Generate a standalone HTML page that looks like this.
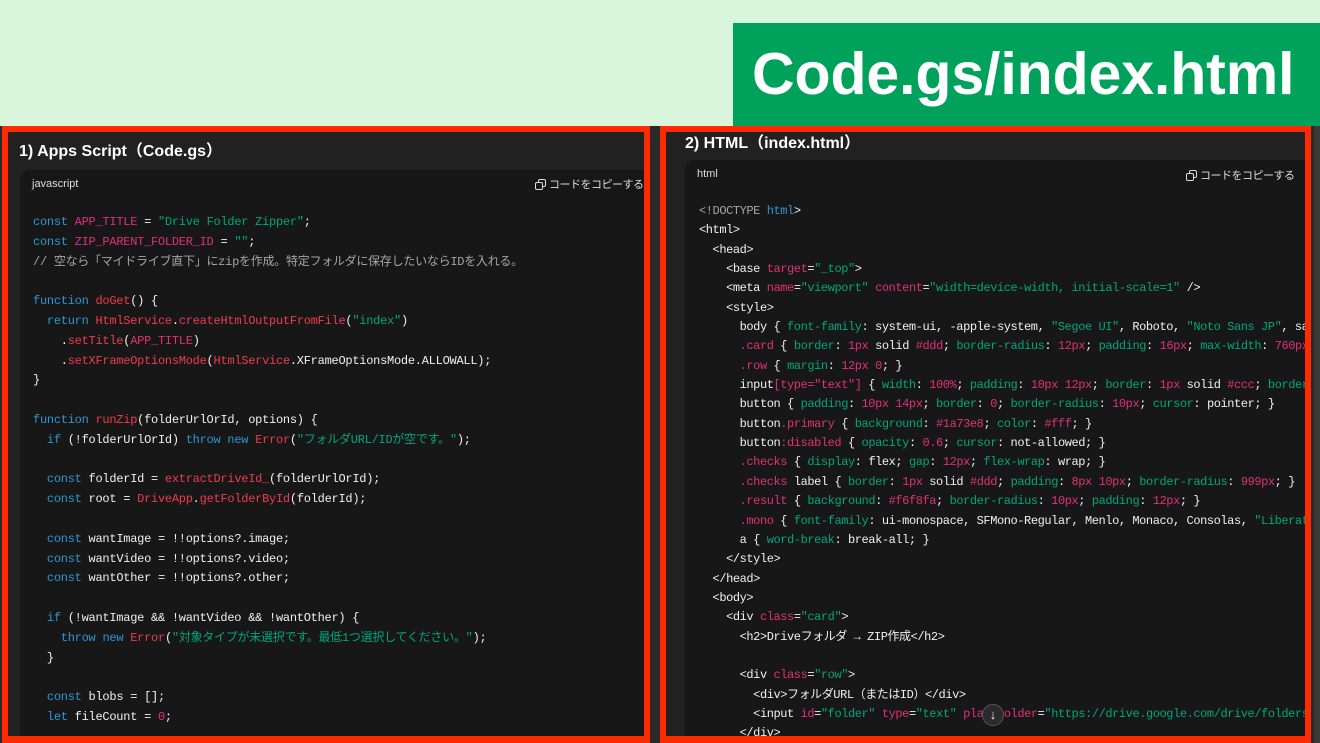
<!DOCTYPE html>
<html><head><meta charset="utf-8"><style>
*{margin:0;padding:0;box-sizing:border-box}
body{width:1320px;height:743px;overflow:hidden;background:#d9f6dd;position:relative;font-family:"Liberation Sans","Noto Sans CJK JP",sans-serif}
.abs{position:absolute}
#hdr{left:733px;top:23px;width:587px;height:103px;background:#00a15a;color:#fff;font-weight:bold;font-size:59px;line-height:103px;padding-left:19px;letter-spacing:-0.1px}
#bg{left:0;top:126px;width:1320px;height:617px;background:#2a2a2a}
.panel{background:#212121;border:6px solid #ff2a00;border-bottom-width:7px;overflow:hidden}
.title{position:absolute;color:#fff;font-weight:bold;font-size:16px}
.code{position:absolute;background:#171717;border-radius:10px;overflow:hidden}
.lang{position:absolute;color:#ddd;font-size:11px}
.copy{position:absolute;color:#ddd;font-size:11px;letter-spacing:-0.5px}
.copy svg{vertical-align:-2px;margin-right:3px}
pre{position:absolute;font-family:"Liberation Mono","Noto Sans CJK JP",monospace;font-size:12px;color:#f0f0f0;white-space:pre}
#lp{line-height:19.8px;letter-spacing:-0.26px}
#rp{line-height:19.35px;letter-spacing:-0.43px}
.k{color:#2e95d3}.r{color:#ef3a4e}.p{color:#df3079}.g{color:#00a67d}.c{color:#a5a5a5}
</style></head><body>
<div class="abs" id="hdr">Code.gs/index.html</div>
<div class="abs" id="bg"></div>
<div class="abs" style="left:1314px;top:126px;width:6px;height:617px;background:#3a3a3a"></div>

<div class="abs panel" style="left:2px;top:126px;width:648px;height:617px">
 <div class="title" style="left:11px;top:5px">1) Apps Script（Code.gs）</div>
 <div class="code" style="left:12px;top:38px;width:650px;height:600px">
  <div class="lang" style="left:12px;top:8px">javascript</div>
  <div class="copy" style="left:515px;top:6px"><svg width="11" height="11" viewBox="0 0 11 11" fill="none" stroke="#ddd" stroke-width="1"><rect x="3.5" y="0.5" width="7" height="7" rx="1.5"/><rect x="0.5" y="3.5" width="7" height="7" rx="1.5" fill="#171717"/></svg>コードをコピーする</div>
<pre id="lp" style="left:13px;top:43px"><span class="k">const</span> <span class="p">APP_TITLE</span> = <span class="g">"Drive Folder Zipper"</span>;
<span class="k">const</span> <span class="p">ZIP_PARENT_FOLDER_ID</span> = <span class="g">""</span>;
<span class="c">// 空なら「マイドライブ直下」にzipを作成。特定フォルダに保存したいならIDを入れる。</span>

<span class="k">function</span> <span class="r">doGet</span>() {
  <span class="k">return</span> <span class="r">HtmlService</span>.<span class="r">createHtmlOutputFromFile</span>(<span class="g">"index"</span>)
    .<span class="r">setTitle</span>(<span class="p">APP_TITLE</span>)
    .<span class="r">setXFrameOptionsMode</span>(<span class="r">HtmlService</span>.XFrameOptionsMode.ALLOWALL);
}

<span class="k">function</span> <span class="r">runZip</span>(folderUrlOrId, options) {
  <span class="k">if</span> (!folderUrlOrId) <span class="k">throw</span> <span class="k">new</span> <span class="r">Error</span>(<span class="g">"フォルダURL/IDが空です。"</span>);

  <span class="k">const</span> folderId = <span class="r">extractDriveId_</span>(folderUrlOrId);
  <span class="k">const</span> root = <span class="r">DriveApp</span>.<span class="r">getFolderById</span>(folderId);

  <span class="k">const</span> wantImage = !!options?.image;
  <span class="k">const</span> wantVideo = !!options?.video;
  <span class="k">const</span> wantOther = !!options?.other;

  <span class="k">if</span> (!wantImage &amp;&amp; !wantVideo &amp;&amp; !wantOther) {
    <span class="k">throw</span> <span class="k">new</span> <span class="r">Error</span>(<span class="g">"対象タイプが未選択です。最低1つ選択してください。"</span>);
  }

  <span class="k">const</span> blobs = [];
  <span class="k">let</span> fileCount = <span class="p">0</span>;</pre>
 </div>
</div>

<div class="abs panel" style="left:660px;top:126px;width:651px;height:617px">
 <div class="title" style="left:19px;top:-3px">2) HTML（index.html）</div>
 <div class="code" style="left:19px;top:28px;width:650px;height:600px">
  <div class="lang" style="left:12px;top:8px">html</div>
  <div class="copy" style="left:501px;top:7px"><svg width="11" height="11" viewBox="0 0 11 11" fill="none" stroke="#ddd" stroke-width="1"><rect x="3.5" y="0.5" width="7" height="7" rx="1.5"/><rect x="0.5" y="3.5" width="7" height="7" rx="1.5" fill="#171717"/></svg>コードをコピーする</div>
<pre id="rp" style="left:14px;top:42px"><span class="c">&lt;!DOCTYPE</span> <span class="k">html</span>&gt;
&lt;html&gt;
  &lt;head&gt;
    &lt;base <span class="p">target</span>=<span class="g">"_top"</span>&gt;
    &lt;meta <span class="p">name</span>=<span class="g">"viewport"</span> <span class="p">content</span>=<span class="g">"width=device-width, initial-scale=1"</span> /&gt;
    &lt;style&gt;
      body { <span class="g">font-family</span>: system-ui, -apple-system, <span class="g">"Segoe UI"</span>, Roboto, <span class="g">"Noto Sans JP"</span>, sans-serif; }
      <span class="p">.card</span> { <span class="g">border</span>: <span class="p">1px</span> solid <span class="p">#ddd</span>; <span class="g">border-radius</span>: <span class="p">12px</span>; <span class="g">padding</span>: <span class="p">16px</span>; <span class="g">max-width</span>: <span class="p">760px</span>; }
      <span class="p">.row</span> { <span class="g">margin</span>: <span class="p">12px 0</span>; }
      input<span class="p">[type="text"]</span> { <span class="g">width</span>: <span class="p">100%</span>; <span class="g">padding</span>: <span class="p">10px 12px</span>; <span class="g">border</span>: <span class="p">1px</span> solid <span class="p">#ccc</span>; <span class="g">border-radius</span>; }
      button { <span class="g">padding</span>: <span class="p">10px 14px</span>; <span class="g">border</span>: <span class="p">0</span>; <span class="g">border-radius</span>: <span class="p">10px</span>; <span class="g">cursor</span>: pointer; }
      button<span class="p">.primary</span> { <span class="g">background</span>: <span class="p">#1a73e8</span>; <span class="g">color</span>: <span class="p">#fff</span>; }
      button<span class="p">:disabled</span> { <span class="g">opacity</span>: <span class="p">0.6</span>; <span class="g">cursor</span>: not-allowed; }
      <span class="p">.checks</span> { <span class="g">display</span>: flex; <span class="g">gap</span>: <span class="p">12px</span>; <span class="g">flex-wrap</span>: wrap; }
      <span class="p">.checks</span> label { <span class="g">border</span>: <span class="p">1px</span> solid <span class="p">#ddd</span>; <span class="g">padding</span>: <span class="p">8px 10px</span>; <span class="g">border-radius</span>: <span class="p">999px</span>; }
      <span class="p">.result</span> { <span class="g">background</span>: <span class="p">#f6f8fa</span>; <span class="g">border-radius</span>: <span class="p">10px</span>; <span class="g">padding</span>: <span class="p">12px</span>; }
      <span class="p">.mono</span> { <span class="g">font-family</span>: ui-monospace, SFMono-Regular, Menlo, Monaco, Consolas, <span class="g">"Liberation Mono"</span>; }
      a { <span class="g">word-break</span>: break-all; }
    &lt;/style&gt;
  &lt;/head&gt;
  &lt;body&gt;
    &lt;div <span class="p">class</span>=<span class="g">"card"</span>&gt;
      &lt;h2&gt;Driveフォルダ → ZIP作成&lt;/h2&gt;

      &lt;div <span class="p">class</span>=<span class="g">"row"</span>&gt;
        &lt;div&gt;フォルダURL（またはID）&lt;/div&gt;
        &lt;input <span class="p">id</span>=<span class="g">"folder"</span> <span class="p">type</span>=<span class="g">"text"</span> <span class="p">placeholder</span>=<span class="g">"https://drive.google.com/drive/folders/..."</span> /&gt;
      &lt;/div&gt;</pre>
 </div>
</div>
<div class="abs" style="left:982px;top:704px;width:22px;height:22px;border-radius:50%;background:#2a2a2a;border:1px solid #555;color:#eee;font-size:13px;line-height:20px;text-align:center">↓</div>
</body></html>
